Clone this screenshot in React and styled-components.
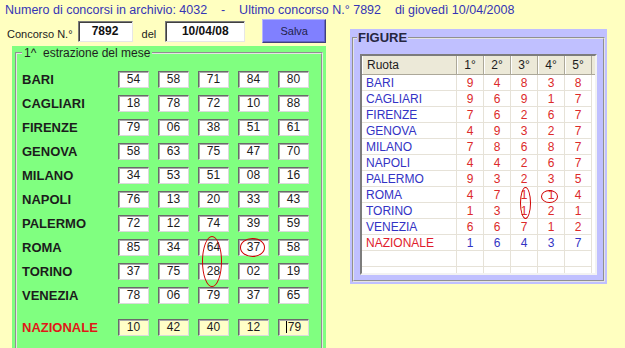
import React from "react";
import styled, { createGlobalStyle } from "styled-components";

const GlobalStyle = createGlobalStyle`
  html, body {
    margin: 0;
    padding: 0;
    background: #ffffc0;
    overflow: hidden;
  }
  body {
    font-family: "Liberation Sans", Arial, sans-serif;
  }
`;

const Page = styled.div`
  width: 625px;
  height: 348px;
  overflow: hidden;
  background: #ffffc0;
`;

const Title = styled.div`
  padding: 2px 0 0 5px;
  font-size: 12.5px;
  line-height: 16px;
  color: #3535b5;
  white-space: pre;
`;

const Main = styled.div`
  display: flex;
  align-items: flex-start;
  padding-left: 7px;
`;

const LeftColumn = styled.div`
  display: flex;
  flex-direction: column;
  width: 319px;
  flex-shrink: 0;
`;

const Controls = styled.div`
  display: flex;
  align-items: center;
  height: 24px;
  margin-top: 1px;
`;

const SmallLabel = styled.span`
  flex-shrink: 0;
  white-space: nowrap;
  font-size: 11px;
  color: #222;
  padding-top: 5px;
  margin-left: ${(p) => p.$ml || 0}px;
`;

const TextBox = styled.div`
  flex-shrink: 0;
  width: ${(p) => p.$w}px;
  height: 21px;
  margin-left: ${(p) => p.$ml || 0}px;
  box-sizing: border-box;
  background: #fff;
  border: 1px solid;
  border-color: #7a7a7a #e6e6e6 #e6e6e6 #7a7a7a;
  box-shadow: inset 1px 1px 0 #404040;
  display: flex;
  align-items: center;
  justify-content: center;
  font-size: 12px;
  font-weight: bold;
  color: #111;
`;

const SaveButton = styled.button`
  flex-shrink: 0;
  width: 64px;
  height: 24px;
  margin-left: 17px;
  padding: 0;
  background: #8080ff;
  border: 1px solid;
  border-color: #b4b4ff #40407c #40407c #b4b4ff;
  box-shadow: inset -1px -1px 0 #6262c8;
  font-family: inherit;
  font-size: 11px;
  color: #22224a;
  cursor: pointer;
`;

const GreenPanel = styled.div`
  margin: 3px 0 0 5px;
  width: 314px;
  height: 310px;
  box-sizing: border-box;
  padding: 0 3px;
  background: #80ff80;
`;

const DrawSet = styled.fieldset`
  margin: 0;
  min-width: 0;
  height: 100%;
  box-sizing: border-box;
  padding: 11px 5px 0 5px;
  border: 2px groove #e4e4e4;
`;

const DrawLegend = styled.legend`
  padding: 0 2px;
  font-size: 12px;
  line-height: 14px;
  color: #1e1e1e;
`;

const RowList = styled.div`
  display: flex;
  flex-direction: column;
  gap: 7px;
`;

const DrawRow = styled.div`
  display: grid;
  grid-template-columns: 87px repeat(5, 31px);
  column-gap: 9px;
  align-items: center;
  height: 17px;
  margin-top: ${(p) => (p.$spaced ? 8 : 0)}px;
`;

const RowLabel = styled.span`
  font-size: 13px;
  font-weight: bold;
  white-space: nowrap;
  color: ${(p) => (p.$red ? "#e01818" : "#1c1c1c")};
`;

const NumBox = styled.div`
  position: relative;
  width: 31px;
  height: 17px;
  box-sizing: border-box;
  background: ${(p) => (p.$yellow ? "#ffffc8" : "#fff")};
  border: 1px solid;
  border-color: #6a6a6a #dadada #dadada #6a6a6a;
  box-shadow: inset 1px 1px 0 #a8a8a8;
  font-size: 12px;
  line-height: 15px;
  text-align: center;
  color: #1c1c1c;
`;

const Caret = styled.span`
  display: inline-block;
  width: 1px;
  height: 12px;
  margin-right: 1px;
  vertical-align: -2px;
  background: #000;
`;

const Ring = styled.span`
  position: absolute;
  left: ${(p) => p.$x}px;
  top: ${(p) => p.$y}px;
  width: ${(p) => p.$w}px;
  height: ${(p) => p.$h}px;
  box-sizing: border-box;
  border: 1px solid #d00000;
  border-radius: 50%;
  z-index: 1;
  pointer-events: none;
`;

const FigurePanel = styled.div`
  flex-shrink: 0;
  margin: 11px 0 0 24px;
  width: 257px;
  height: 255px;
  box-sizing: border-box;
  padding: 1px 2px 2px;
  background: #c0c0ff;
`;

const FigureSet = styled.fieldset`
  margin: 0;
  min-width: 0;
  padding: 8px 6px 5px;
  border: 2px groove #e4e4e4;
`;

const FigureLegend = styled.legend`
  margin-left: -3px;
  padding: 0 1px;
  font-size: 13px;
  font-weight: bold;
  line-height: 16px;
  color: #262640;
`;

const TableFrame = styled.div`
  width: 237px;
  height: 221px;
  box-sizing: border-box;
  overflow: hidden;
  background: #fff;
  border: 2px solid;
  border-color: #7c7c7c #f2f2f2 #f2f2f2 #7c7c7c;
  font-size: 12px;
`;

const TableRow = styled.div`
  display: grid;
  grid-template-columns: 95px repeat(5, 27px) 3px;
  height: ${(p) => (p.$head ? 19 : 16)}px;
  background: ${(p) => (p.$head ? "#ece9d8" : "transparent")};
`;

const HeadCell = styled.div`
  display: flex;
  align-items: center;
  justify-content: ${(p) => (p.$left ? "flex-start" : "center")};
  padding-left: ${(p) => (p.$left ? 5 : 0)}px;
  box-sizing: border-box;
  border-right: 1px solid #aca899;
  border-bottom: 1px solid #aca899;
  box-shadow: inset 1px 0 0 #fff;
  color: #1c1c1c;
`;

const HeadFill = styled.div`
  border-bottom: 1px solid #aca899;
`;

const Cell = styled.div`
  position: relative;
  display: flex;
  align-items: center;
  justify-content: ${(p) => (p.$left ? "flex-start" : "center")};
  padding-left: ${(p) => (p.$left ? 4 : 0)}px;
  box-sizing: border-box;
  border-right: 1px solid #e6e2d8;
  border-bottom: 1px solid #e6e2d8;
  color: ${(p) => p.$color || "#1c1c1c"};
`;

const BLUE = "#3333c4";
const RED = "#dc2a2a";

const draws = [
  ["BARI", ["54", "58", "71", "84", "80"]],
  ["CAGLIARI", ["18", "78", "72", "10", "88"]],
  ["FIRENZE", ["79", "06", "38", "51", "61"]],
  ["GENOVA", ["58", "63", "75", "47", "70"]],
  ["MILANO", ["34", "53", "51", "08", "16"]],
  ["NAPOLI", ["76", "13", "20", "33", "43"]],
  ["PALERMO", ["72", "12", "74", "39", "59"]],
  ["ROMA", ["85", "34", "64", "37", "58"]],
  ["TORINO", ["37", "75", "28", "02", "19"]],
  ["VENEZIA", ["78", "06", "79", "37", "65"]],
];
const nazionale = ["10", "42", "40", "12", "79"];

const figures = [
  ["BARI", [9, 4, 8, 3, 8]],
  ["CAGLIARI", [9, 6, 9, 1, 7]],
  ["FIRENZE", [7, 6, 2, 6, 7]],
  ["GENOVA", [4, 9, 3, 2, 7]],
  ["MILANO", [7, 8, 6, 8, 7]],
  ["NAPOLI", [4, 4, 2, 6, 7]],
  ["PALERMO", [9, 3, 2, 3, 5]],
  ["ROMA", [4, 7, 1, 1, 4]],
  ["TORINO", [1, 3, 1, 2, 1]],
  ["VENEZIA", [6, 6, 7, 1, 2]],
  ["NAZIONALE", [1, 6, 4, 3, 7]],
];

const App = () => {
  return (
    <Page>
      <GlobalStyle />
      <Title>
        {"Numero di concorsi in archivio: 4032    -    Ultimo concorso N.° 7892    di giovedì 10/04/2008"}
      </Title>
      <Main>
        <LeftColumn>
          <Controls>
            <SmallLabel>Concorso N.°</SmallLabel>
            <TextBox $w={55} $ml={5}>7892</TextBox>
            <SmallLabel $ml={9}>del</SmallLabel>
            <TextBox $w={80} $ml={9}>10/04/08</TextBox>
            <SaveButton>Salva</SaveButton>
          </Controls>
          <GreenPanel>
            <DrawSet>
              <DrawLegend>1^&nbsp; estrazione del mese</DrawLegend>
              <RowList>
                {draws.map(([name, nums]) => (
                  <DrawRow key={name}>
                    <RowLabel>{name}</RowLabel>
                    {nums.map((n, i) => (
                      <NumBox key={i}>
                        {n}
                        {name === "ROMA" && i === 2 && <Ring $x={3} $y={-4} $w={20} $h={51} />}
                        {name === "ROMA" && i === 3 && <Ring $x={1} $y={-2} $w={25} $h={19} />}
                      </NumBox>
                    ))}
                  </DrawRow>
                ))}
                <DrawRow $spaced>
                  <RowLabel $red>NAZIONALE</RowLabel>
                  {nazionale.map((n, i) => (
                    <NumBox key={i} $yellow>
                      {i === 4 && <Caret />}
                      {n}
                    </NumBox>
                  ))}
                </DrawRow>
              </RowList>
            </DrawSet>
          </GreenPanel>
        </LeftColumn>

        <FigurePanel>
          <FigureSet>
            <FigureLegend>FIGURE</FigureLegend>
            <TableFrame>
              <TableRow $head>
                <HeadCell $left>Ruota</HeadCell>
                {["1°", "2°", "3°", "4°", "5°"].map((h) => (
                  <HeadCell key={h}>{h}</HeadCell>
                ))}
                <HeadFill />
              </TableRow>
              {figures.map(([name, nums]) => {
                const naz = name === "NAZIONALE";
                return (
                  <TableRow key={name}>
                    <Cell $left $color={naz ? "#e01c2c" : BLUE}>{name}</Cell>
                    {nums.map((n, i) => (
                      <Cell key={i} $color={naz ? BLUE : RED}>
                        {n}
                        {name === "ROMA" && i === 2 && <Ring $x={9} $y={0} $w={11} $h={32} />}
                        {name === "ROMA" && i === 3 && <Ring $x={3} $y={3} $w={17} $h={13} />}
                      </Cell>
                    ))}
                    <div />
                  </TableRow>
                );
              })}
              {[0, 1].map((r) => (
                <TableRow key={"empty" + r}>
                  {[0, 1, 2, 3, 4, 5].map((c) => (
                    <Cell key={c} />
                  ))}
                  <div />
                </TableRow>
              ))}
            </TableFrame>
          </FigureSet>
        </FigurePanel>
      </Main>
    </Page>
  );
};

export default App;
